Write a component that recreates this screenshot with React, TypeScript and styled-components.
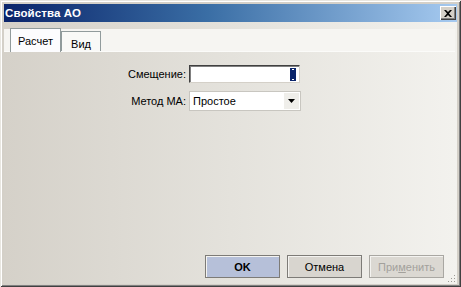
import * as React from 'react';
import styled, { createGlobalStyle } from 'styled-components';

const GlobalStyle = createGlobalStyle`
    html, body {
        margin: 0;
        padding: 0;
        width: 461px;
        height: 287px;
        overflow: hidden;
        background: #d4d0c8;
    }
    body {
        font-family: Tahoma, "Liberation Sans", Arial, sans-serif;
        font-size: 11px;
        color: #000;
    }
`;

const Frame = styled.div`
    box-sizing: border-box;
    width: 461px;
    height: 287px;
    padding: 4px 4px 3px 4px;
    display: flex;
    flex-direction: column;
    background: #d4d0c8;
    box-shadow: inset 1px 1px #e8e6e0, inset -1px -1px #404040, inset 2px 2px #ffffff, inset -2px -2px #808080;
`;

const TitleBar = styled.div`
    height: 18px;
    display: flex;
    align-items: center;
    justify-content: space-between;
    padding: 0 1px 0 1px;
    background: linear-gradient(to right, #0a246a 0%, #3a6ea5 45%, #a6caf0 100%);
`;

const Title = styled.span`
    color: #fff;
    font-weight: bold;
    font-size: 11.5px;
    letter-spacing: 0.1px;
`;

const CloseButton = styled.div`
    box-sizing: border-box;
    width: 16px;
    height: 14px;
    background: #d4d0c8;
    display: flex;
    align-items: center;
    justify-content: center;
    box-shadow: inset 1px 1px #fff, inset -1px -1px #404040, inset -2px -2px #808080;
`;

const Body = styled.div`
    flex: 1;
    position: relative;
    display: flex;
    flex-direction: column;
    padding-top: 7px;
    background: linear-gradient(to right, #d5d1c9 0%, #e4e2dc 50%, #f3f2ee 100%);
`;

const TabStrip = styled.div`
    height: 22px;
    display: flex;
    align-items: flex-end;
    padding-left: 6px;
    margin: 0 2px 0 0;
    background: #f6f5f2;
    border-bottom: 1px solid #fbfbf9;
`;

const Tab = styled.div<{ $active?: boolean }>`
    box-sizing: border-box;
    height: ${p => (p.$active ? '24px' : '20px')};
    width: ${p => (p.$active ? '51px' : '40px')};
    display: flex;
    align-items: center;
    justify-content: center;
    background: ${p => (p.$active ? '#fcfcfe' : '#f9f9f7')};
    border: 1px solid #919b9c;
    border-bottom: none;
    margin-bottom: ${p => (p.$active ? '-1px' : '0')};
    padding-top: ${p => (p.$active ? '1px' : '4px')};
    z-index: ${p => (p.$active ? 1 : 0)};
`;

const Panel = styled.div`
    flex: 1;
    display: flex;
    flex-direction: column;
`;

const Form = styled.div`
    display: grid;
    grid-template-columns: 182px 112px;
    column-gap: 3px;
    row-gap: 8px;
    align-items: center;
    margin-top: 13px;
`;

const Label = styled.label`
    text-align: right;
`;

const TextField = styled.div`
    box-sizing: border-box;
    height: 18px;
    width: 111px;
    background: #fff;
    border: 1px solid;
    border-color: #404040 #d4d0c8 #d4d0c8 #404040;
    box-shadow: inset 1px 1px #808080;
    display: flex;
    justify-content: flex-end;
    align-items: center;
    padding-right: 3px;
`;

const Caret = styled.div`
    width: 6px;
    height: 13px;
    background: #0a246a;
    display: flex;
    align-items: center;
    justify-content: center;
    &::after {
        content: '';
        width: 2px;
        height: 9px;
        border: 1px solid #fff;
        border-left: none;
        border-right: none;
    }
`;

const Combo = styled.div`
    box-sizing: border-box;
    height: 20px;
    width: 112px;
    background: #fff;
    border: 1px solid #c8c6c0;
    display: flex;
    align-items: center;
    padding: 1px 1px 1px 3px;
`;

const ComboText = styled.span`
    flex: 1;
`;

const ComboArrow = styled.div`
    width: 15px;
    align-self: stretch;
    background: #efeeea;
    display: flex;
    align-items: center;
    justify-content: center;
`;

const Footer = styled.div`
    display: flex;
    justify-content: flex-end;
    gap: 7px;
    padding: 0 13px 6px 0;
`;

const Button = styled.div<{ $variant?: 'default' | 'disabled' }>`
    box-sizing: border-box;
    width: 75px;
    height: 23px;
    display: flex;
    align-items: center;
    justify-content: center;
    border: 1px solid ${p => (p.$variant === 'disabled' ? '#a9a7a2' : '#7d7b77')};
    background: ${p => (p.$variant === 'default' ? '#b6c0d9' : p.$variant === 'disabled' ? '#dbd8d2' : '#d8d5cf')};
    color: ${p => (p.$variant === 'disabled' ? '#a3a19c' : '#000')};
    font-weight: ${p => (p.$variant === 'default' ? 'bold' : 'normal')};
    box-shadow: inset 1px 1px #f4f3f0;
`;

const Grip = styled.svg`
    position: absolute;
    right: 1px;
    bottom: 1px;
`;

export default function App() {
    return (
        <>
            <GlobalStyle />
            <Frame>
                <TitleBar>
                    <Title>Свойства АО</Title>
                    <CloseButton>
                        <svg width="8" height="7" viewBox="0 0 8 7">
                            <path d="M0 0h2l2 2 2-2h2L5 3.5 8 7H6L4 5 2 7H0l3-3.5z" fill="#000" />
                        </svg>
                    </CloseButton>
                </TitleBar>
                <Body>
                    <TabStrip>
                        <Tab $active>Расчет</Tab>
                        <Tab>Вид</Tab>
                    </TabStrip>
                    <Panel>
                        <Form>
                            <Label>Смещение:</Label>
                            <TextField>
                                <Caret />
                            </TextField>
                            <Label>Метод МА:</Label>
                            <Combo>
                                <ComboText>Простое</ComboText>
                                <ComboArrow>
                                    <svg width="7" height="4" viewBox="0 0 7 4">
                                        <path d="M0 0h7L3.5 4z" fill="#000" />
                                    </svg>
                                </ComboArrow>
                            </Combo>
                        </Form>
                    </Panel>
                    <Footer>
                        <Button $variant="default">OK</Button>
                        <Button>Отмена</Button>
                        <Button $variant="disabled">
                            <span>
                                При<u>м</u>енить
                            </span>
                        </Button>
                    </Footer>
                    <Grip width="10" height="10" viewBox="0 0 10 10">
                        {[
                            [8, 2],
                            [8, 5],
                            [5, 5],
                            [8, 8],
                            [5, 8],
                            [2, 8],
                        ].map(([x, y]) => (
                            <rect key={`${x}-${y}`} x={x} y={y} width="1" height="1" fill="#9c9a94" />
                        ))}
                    </Grip>
                </Body>
            </Frame>
        </>
    );
}
